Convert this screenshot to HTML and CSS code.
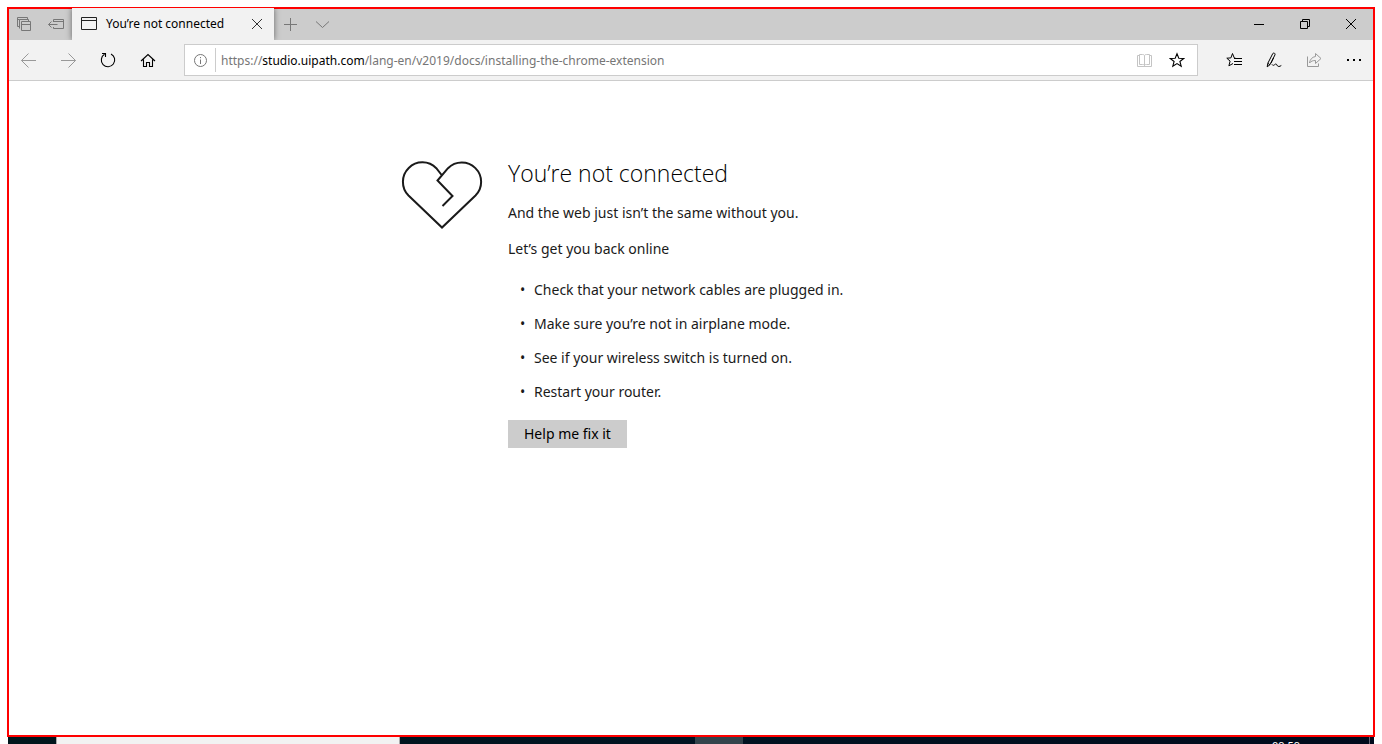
FILE: index.html
```html
<!DOCTYPE html>
<html lang="en">
<head>
<meta charset="utf-8">
<meta name="viewport" content="width=device-width, initial-scale=1">
<title>You’re not connected</title>
<link rel="stylesheet" href="styles.css">
</head>
<body>
<div class="window">
  <header class="titlebar">
    <div class="tab-tools">
      <button class="tab-tool" type="button" aria-label="Tabs you've set aside"><svg class="icon" viewBox="0 0 16 16"><path d="M3.500 10.500h-2v-9h10v2M1.500 3.500h2M3.500 12.500v-9h9v2M5.500 5.500h9v9h-9zM5.500 8.500h9"/></svg></button>
      <button class="tab-tool" type="button" aria-label="Set these tabs aside"><svg class="icon" viewBox="0 0 16 16"><path d="M5.500 6V3.500h10v9h-10V11M5.500 5.500h10M.5 8.500h9M3.500 5.500l-3 3 3 3"/></svg></button>
    </div>
    <div class="tab">
      <svg class="icon" viewBox="0 0 16 16"><path d="M.5 1.500h15v12H.5zM.5 4.500h15"/></svg>
      <span class="tab-title">You’re not connected</span>
      <button class="tab-close" type="button" aria-label="Close tab"><svg class="icon" viewBox="0 0 16 16"><path d="M3 3l10 10M13 3L3 13"/></svg></button>
    </div>
    <div class="tab-actions">
      <button class="tab-action" type="button" aria-label="New tab"><svg class="icon" viewBox="0 0 16 16"><path d="M8.500 2v13M2 8.500h13"/></svg></button>
      <button class="tab-action" type="button" aria-label="Show tab previews"><svg class="icon" viewBox="0 0 16 16"><path d="M2 5.500l6.500 6 6.500-6"/></svg></button>
    </div>
    <div class="caption">
      <button type="button" aria-label="Minimize"><svg class="icon" viewBox="0 0 16 16"><path d="M3 8.500h10"/></svg></button>
      <button type="button" aria-label="Restore"><svg class="icon" viewBox="0 0 16 16"><path d="M3.500 5.500h7v7h-7zM5.500 5.500v-2h7v7h-2"/></svg></button>
      <button type="button" aria-label="Close"><svg class="icon" viewBox="0 0 16 16"><path d="M3 3l10 10M13 3L3 13"/></svg></button>
    </div>
  </header>
  <nav class="toolbar" aria-label="Navigation">
    <div class="tools">
      <button class="faded" type="button" aria-label="Back"><svg class="icon" viewBox="0 0 16 16"><path d="M1.500 8.500H16M8.500 1.500l-7 7 7 7"/></svg></button>
      <button class="faded" type="button" aria-label="Forward"><svg class="icon" viewBox="0 0 16 16"><path d="M1 8.500h14.500M8.500 1.500l7 7-7 7"/></svg></button>
      <button type="button" aria-label="Refresh"><svg class="icon thick" viewBox="0 0 16 16"><path d="M4.500 2.300A6.700 6.700 0 1 0 11 2M2 1.500H5.500V5"/></svg></button>
      <button type="button" aria-label="Home"><svg class="icon thick" viewBox="0 0 16 16"><path d="M1 9l7-6.500L15 9M3.500 7.500v7h3v-4h3v4h3v-7"/></svg></button>
    </div>
    <div class="address">
      <button class="site-info" type="button" aria-label="Site information"><svg class="icon" viewBox="0 0 16 16"><circle cx="8.500" cy="8.500" r="6"/><path d="M8.500 7.500v4.500M8.500 5v1.200"/></svg></button>
      <div class="url" role="textbox" aria-label="Address" contenteditable="true" spellcheck="false">https://<span class="domain">studio.uipath.com</span>/lang-en/v2019/docs/installing-the-chrome-extension</div>
      <button class="pale" type="button" aria-label="Reading view"><svg class="icon" viewBox="0 0 16 16"><path d="M7.500 3.500C7 2.500 6 2.500 5.500 2.500h-3v10h3c1 0 1.500 0 2 1 .5-1 1-1 2-1h3v-10h-3c-.5 0-1.500 0-2 1zM7.500 3.500v10M2.500 3.500h-2v11h14v-11h-2"/></svg></button>
      <button type="button" aria-label="Add to favorites"><svg class="icon thick" viewBox="0 0 16 16"><path d="M8 1.800l1.800 4.400 4.900.3-3.800 3 1.300 4.700L8 11.600l-4.200 2.600 1.300-4.700-3.800-3 4.900-.3z"/></svg></button>
    </div>
    <div class="tools">
      <button type="button" aria-label="Favorites"><svg class="icon" viewBox="0 0 16 16"><path d="M9.500 6.200L8.200 5.800 6.500 1.500 4.900 5.900.8 6.200l3.300 2.900-1.200 4.700L7 11.500M8 6.500h8M8 9.500h8M8 12.500h8"/></svg></button>
      <button type="button" aria-label="Add notes"><svg class="icon" viewBox="0 0 16 16"><path d="M.8 14.800l.7-3.800-.5-7C1 2 2 .500 4 .700L9 10M.8 14.800" stroke="none"/><path d="M1.200 14.800l.6-3.500L6.800 1.500c.8-1 2.800-.2 2.200 1.300L4 12.700l-2.800 2.100M1.800 11.300L4 12.700M7.500 6L5 11M6 12.500c1.500 2 2.500-.2 3.800-.500 1.200-.2 1 2.500 3 2.500 1 0 1.500-.5 2.500-1"/></svg></button>
      <button class="faded" type="button" aria-label="Share"><svg class="icon" viewBox="0 0 16 16"><path d="M1.500 4.500v10h11v-3M9.500 1.500l5.500 5-5.500 5V8.500C7 8.500 5 9 3.500 11 4 7.500 6 5 9.500 4.500z"/></svg></button>
      <button type="button" aria-label="Settings and more"><svg class="icon dots" viewBox="0 0 16 16"><path d="M1 7h2v2H1zM7 7h2v2H7zM13 7h2v2h-2z"/></svg></button>
    </div>
  </nav>
  <main class="page">
    <article class="notice">
      <svg class="heart" viewBox="0 0 80 68" aria-hidden="true"><path d="M40 14.500L34.300 7.200A19.300 19.300 0 1 0 6.500 34.500L40 66.500 73.500 34.500A19.300 19.300 0 1 0 46 7.200L35.500 19.500 50.500 35 40.500 45"/></svg>
      <div class="message">
        <h1>You’re not connected</h1>
        <p>And the web just isn’t the same without you.</p>
        <p>Let’s get you back online</p>
        <ul>
          <li>Check that your network cables are plugged in.</li>
          <li>Make sure you’re not in airplane mode.</li>
          <li>See if your wireless switch is turned on.</li>
          <li>Restart your router.</li>
        </ul>
        <button class="fix" type="button">Help me fix it</button>
      </div>
    </article>
  </main>
</div>
<footer class="taskbar">
  <div class="search"></div>
  <div class="apps"><div class="app-active"></div></div>
  <time class="clock">09:59</time>
  <div class="show-desktop"></div>
</footer>
</body>
</html>
```

FILE: styles.css
```css
* { box-sizing: border-box; }

body {
  display: flex;
  flex-direction: column;
  height: 100vh;
  margin: 0;
  padding: 8px 8px 0;
  overflow: hidden;
  background: #fff;
  color: #1a1a1a;
  font-family: "Noto Sans", "Open Sans", sans-serif;
}

button {
  display: flex;
  align-items: center;
  justify-content: center;
  margin: 0;
  padding: 0;
  border: 0;
  background: none;
  color: #000;
  font: inherit;
}

.icon {
  flex: none;
  width: 16px;
  height: 16px;
  fill: none;
  stroke: currentColor;
  stroke-width: 1;
}

.thick { stroke-width: 1.1; }

.dots {
  fill: currentColor;
  stroke: none;
}

.window {
  display: flex;
  flex: 1;
  flex-direction: column;
  z-index: 1;
  outline: 2px solid #f00;
  outline-offset: -1px;
}

.titlebar {
  display: flex;
  height: 32px;
  background: #ccc;
}

.tab-tools, .tab-actions, .caption, .tools { display: flex; }

.tab-tools { width: 64px; }
.tab-tool { width: 32px; color: #777; }

.tab {
  display: flex;
  align-items: center;
  width: 202px;
  padding: 0 9px;
  background: #f2f2f2;
  box-shadow: 0 0 6px rgba(0, 0, 0, 0.5);
  clip-path: inset(0 -8px);
  color: #222;
}

.tab-title {
  flex: 1;
  padding-left: 9px;
  color: #000;
  font-size: 12px;
  line-height: 16px;
  white-space: nowrap;
}

.tab-close { color: #333; }

.tab-action { width: 32px; color: #777; }

.caption { margin-left: auto; }
.caption button { width: 46px; }

.toolbar {
  display: flex;
  align-items: center;
  gap: 16px;
  height: 41px;
  border-bottom: 1px solid #ccc;
  background: #f2f2f2;
}

.tools button { width: 40px; height: 40px; }

.toolbar .faded { color: #999; }
.toolbar .pale { color: #c4c4c4; }

.address {
  display: flex;
  flex: 1;
  align-items: center;
  height: 32px;
  padding-right: 4px;
  border: 1px solid #ccc;
  background: #fff;
}

.address button { width: 32px; height: 24px; }

.address .site-info {
  width: 31px;
  border-right: 1px solid #ccc;
  color: #777;
}

.url {
  flex: 1;
  padding: 1px 0 0 5px;
  outline: 0;
  color: #767676;
  font-size: 12px;
  line-height: 20px;
  white-space: nowrap;
}

.domain { color: #000; }

.page {
  flex: 1;
  padding: 77px 16px 0;
  background: #fff;
}

.notice {
  display: flex;
  gap: 26px;
  max-width: 578px;
  margin: 0 auto;
}

.heart {
  flex: none;
  width: 80px;
  height: 68px;
  margin-top: 3px;
  overflow: visible;
  fill: none;
  stroke: #1a1a1a;
  stroke-width: 2;
}

.message {
  font-size: 14px;
  line-height: 20px;
}

h1 {
  margin: 0 0 13px;
  color: #000;
  font-family: "Open Sans", "Noto Sans", sans-serif;
  font-size: 23px;
  font-weight: 300;
  line-height: 30px;
  padding-bottom: 2px;
}

p { margin: 0 0 16px; }

ul {
  display: grid;
  gap: 14px;
  margin: 21px 0 18px;
  padding: 0 0 0 12px;
  list-style: none;
}

li { display: flex; }

li::before {
  content: "•";
  flex: none;
  width: 14px;
}

.fix {
  height: 28px;
  padding: 0 16px;
  background: #ccc;
}

.taskbar {
  display: flex;
  height: 8px;
  overflow: hidden;
  background: linear-gradient(90deg, #00161c, #001422 50%, #000a1c);
}

.search {
  width: 344px;
  margin-left: 48px;
  border: solid #aaa;
  border-width: 0 1px;
  background: #f2f2f2;
}

.apps { flex: 1; padding-left: 295px; }

.app-active {
  width: 48px;
  height: 8px;
  background: #33444c;
}

.clock {
  padding: 3px 69px 0 0;
  color: #fff;
  font-size: 11px;
  line-height: 14px;
}

.show-desktop {
  width: 5px;
  border-left: 1px solid #667;
}
```
